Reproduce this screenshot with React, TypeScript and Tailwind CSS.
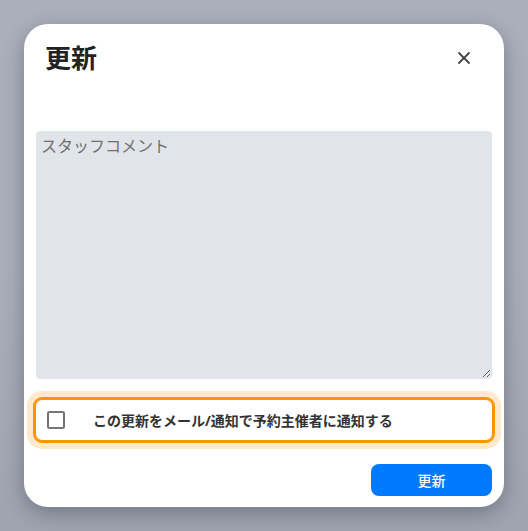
import { useState } from "react";

export default function App() {
  const [notify, setNotify] = useState(false);

  return (
    <div
      className="h-[531px] w-[528px] overflow-hidden bg-gradient-to-b from-[#aab0bb] via-[#a9afba] to-[#9ea4b0] pl-6 pt-6"
      style={{ fontFamily: '"Noto Sans", "Noto Sans CJK JP", sans-serif' }}
    >
      <div className="flex h-[483px] w-[480px] flex-col rounded-[24px] bg-white shadow-[0_6px_20px_rgba(30,35,45,0.35)]">
        <div className="flex items-center justify-between pl-[21px] pr-[30px] pt-[19px]">
          <h2 className="text-[26px] font-bold leading-[30px] text-[#222]">更新</h2>
          <button className="flex h-5 w-5 items-center justify-center text-[#444]">
            <svg width="14" height="14" viewBox="0 0 14 14" fill="none" stroke="currentColor" strokeWidth="1.8" strokeLinecap="round">
              <path d="M2 2 L12 12 M12 2 L2 12" />
            </svg>
          </button>
        </div>

        <div className="px-3 pt-[58px]">
          <textarea
            placeholder="スタッフコメント"
            className="block h-[248px] w-[456px] resize-y rounded-[4px] border border-[#e1e5e9] bg-[#e1e5e9] px-1 pb-1 pt-[2px] text-[16px] leading-6 text-[#333] outline-none placeholder:text-[#6f6f6f]"
          />
        </div>

        <div className="px-[9px] pt-[18px]">
          <label className="flex h-[46px] cursor-pointer items-center rounded-[9px] border-[3px] border-[#ff9500] shadow-[0_0_0_6px_#ffe9cc]">
            <span className="ml-[11px] flex h-[18px] w-[18px] items-center justify-center rounded-[2px] border-2 border-[#757575] bg-white">
              {notify && (
                <svg width="12" height="12" viewBox="0 0 12 12" fill="none" stroke="#333" strokeWidth="2">
                  <path d="M2 6 L5 9 L10 3" />
                </svg>
              )}
            </span>
            <input
              type="checkbox"
              className="hidden"
              checked={notify}
              onChange={(e) => setNotify(e.target.checked)}
            />
            <span className="ml-[28px] text-[14px] font-bold text-[#333]">
              この更新をメール/通知で予約主催者に通知する
            </span>
          </label>
        </div>

        <div className="flex justify-end px-3 pt-[21px]">
          <button className="h-8 w-[121px] rounded-[8px] bg-[#007aff] text-[14px] font-medium text-white">
            更新
          </button>
        </div>
      </div>
    </div>
  );
}
